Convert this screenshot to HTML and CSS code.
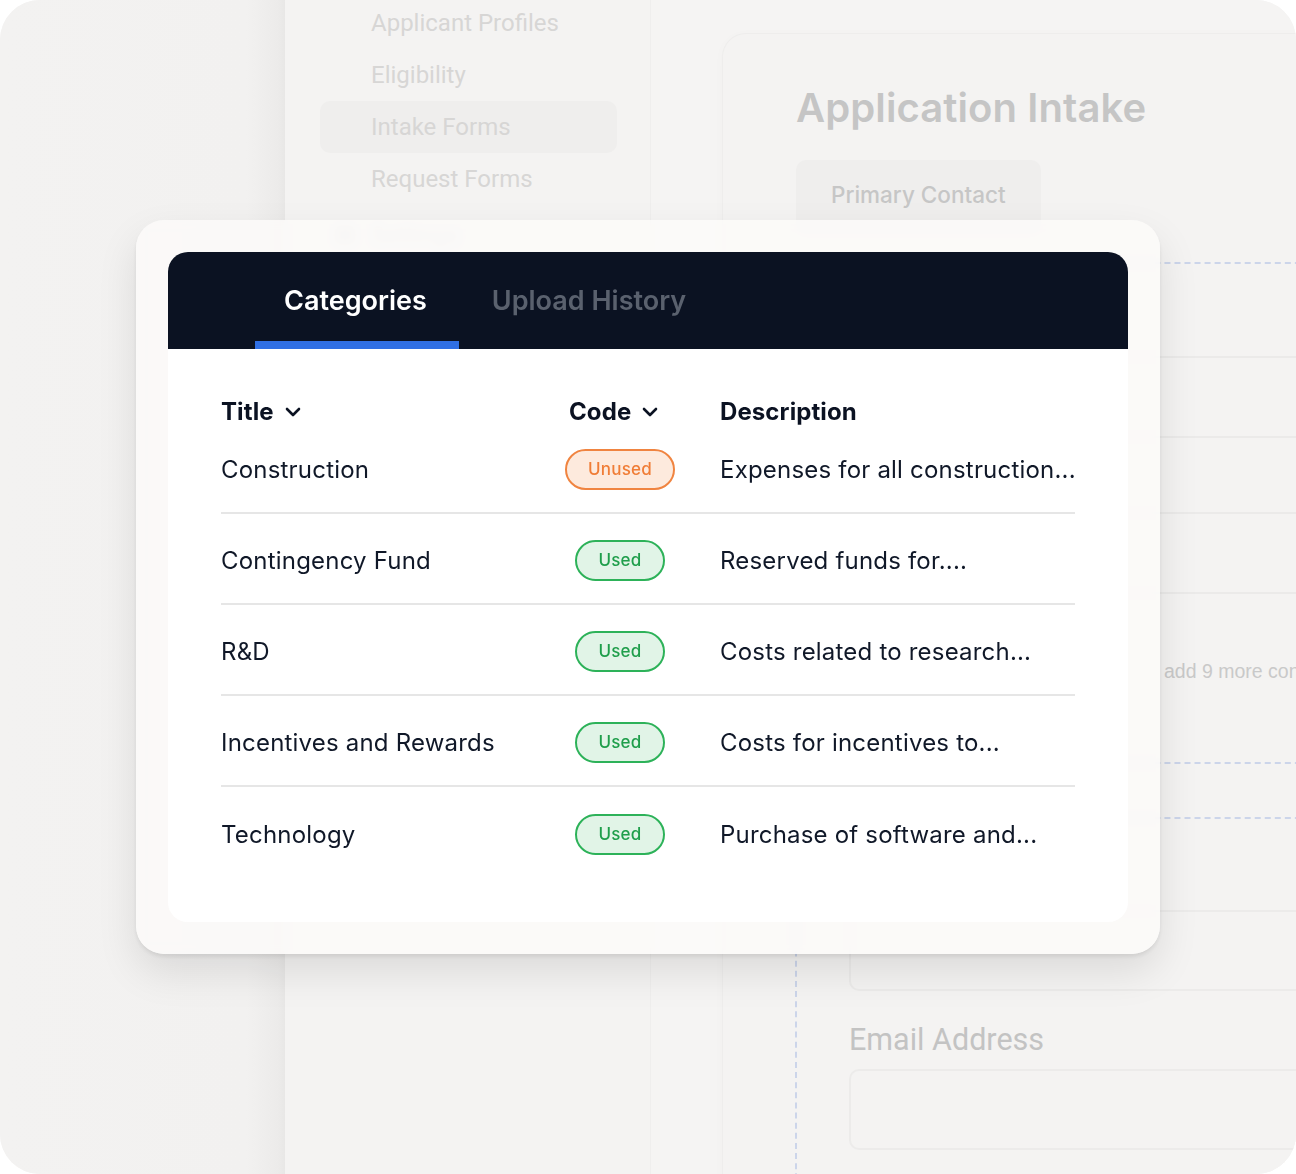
FILE: index.html
```html
<!DOCTYPE html>
<html lang="en">
<head>
  <meta charset="UTF-8">
  <title>Categories</title>
  <meta name="viewport" content="width=device-width, initial-scale=1">
  <link rel="stylesheet" href="styles.css">
</head>
<body>
  <div class="frame">
    <div class="gutter"></div>

    <aside class="sidebar">
      <nav class="nav">
        <div class="nav-item">Applicant Profiles</div>
        <div class="nav-item">Eligibility</div>
        <div class="nav-item active">Intake Forms</div>
        <div class="nav-item">Request Forms</div>
        <div class="nav-item with-icon"><span class="nav-icon"></span>Settings</div>
      </nav>
    </aside>

    <main class="main">
      <section class="form-card">
        <h1 class="form-title">Application Intake</h1>
        <div class="form-tab">Primary Contact</div>
        <div class="dashed"></div>
        <div class="field-rows">
          <div class="field-row tall"></div>
          <div class="field-row"></div>
          <div class="field-row short"></div>
          <div class="field-row"></div>
        </div>
        <div class="add-more">add 9 more contacts</div>
        <div class="dashed first"></div>
        <div class="dashed second"></div>
        <div class="nested">
          <div class="input top-input"></div>
          <label class="field-label">Email Address</label>
          <div class="input"></div>
        </div>
      </section>
    </main>

    <!-- floating categories panel -->
    <div class="overlay">
      <div class="panel">
        <div class="tabs">
          <div class="tab active">Categories</div>
          <div class="tab">Upload History</div>
        </div>
        <div class="table">
          <div class="row head">
            <div class="cell">Title <svg class="chev" viewBox="0 0 16 10"><path d="M2 2l6 6 6-6"/></svg></div>
            <div class="cell code-head">Code <svg class="chev" viewBox="0 0 16 10"><path d="M2 2l6 6 6-6"/></svg></div>
            <div class="cell desc">Description</div>
          </div>
          <div class="row">
            <div class="cell">Construction</div>
            <div class="cell code"><span class="badge unused">Unused</span></div>
            <div class="cell desc">Expenses for all construction...</div>
          </div>
          <div class="row">
            <div class="cell">Contingency Fund</div>
            <div class="cell code"><span class="badge used">Used</span></div>
            <div class="cell desc">Reserved funds for....</div>
          </div>
          <div class="row">
            <div class="cell">R&amp;D</div>
            <div class="cell code"><span class="badge used">Used</span></div>
            <div class="cell desc">Costs related to research...</div>
          </div>
          <div class="row">
            <div class="cell">Incentives and Rewards</div>
            <div class="cell code"><span class="badge used">Used</span></div>
            <div class="cell desc">Costs for incentives to...</div>
          </div>
          <div class="row">
            <div class="cell">Technology</div>
            <div class="cell code"><span class="badge used">Used</span></div>
            <div class="cell desc">Purchase of software and...</div>
          </div>
        </div>
      </div>
    </div>
  </div>
</body>
</html>
```

FILE: styles.css
```css
:root {
  --bg: #f4f3f2;
  --navy: #0b1222;
  --ink: #101828;
  --faint: #d7d6d5;
  --ghost: #c5c5c5;
  --line: #ebeae9;
  --dash: #ccd5ea;
  --blue: #2f6fe4;
}
* { box-sizing: border-box; }
body {
  margin: 0;
  background: #fff;
  font-family: 'Inter', 'Noto Sans', sans-serif;
  color: var(--ink);
}
.frame {
  position: relative;
  width: 1296px;
  height: 1174px;
  background: var(--bg);
  border-radius: 40px;
  overflow: hidden;
  display: flex;
}

/* background app, faded */
.gutter {
  width: 285px;
  flex-shrink: 0;
  background: linear-gradient(90deg, #f3f2f1 0, #f2f1f0 246px, #ecebea 278px, #e8e7e6 285px);
}
.sidebar {
  width: 366px;
  flex-shrink: 0;
  background: #f4f3f2;
  border-right: 1px solid #efeeed;
}
.nav {
  margin: -3px 33px 0 35px;
}
.nav-item {
  height: 52px;
  line-height: 52px;
  padding-left: 51px;
  font-family: 'Roboto', 'Liberation Sans', sans-serif;
  font-size: 24px;
  color: var(--faint);
  border-radius: 10px;
}
.nav-item.active {
  background: #efeeed;
}
.nav-item.with-icon {
  display: flex;
  align-items: center;
  padding-left: 15px;
  gap: 16px;
  line-height: normal;
  margin-top: 4px;
}
.nav-icon {
  width: 20px;
  height: 18px;
  border-radius: 3px;
  background: #e2e1e0;
}
.main {
  flex: 1;
  padding: 33px 0 0 71px;
  background: #f5f4f3;
}
.form-card {
  height: 1300px;
  background: var(--bg);
  border: 1px solid #eeedec;
  border-right: none;
  border-radius: 24px 0 0 24px;
  padding: 50px 0 0 73px;
  box-shadow: 0 2px 12px rgba(0,0,0,0.02);
}
.form-title {
  margin: 0;
  font-size: 40px;
  line-height: 48px;
  font-weight: 600;
  color: var(--ghost);
  letter-spacing: 0.1px;
}
.form-tab {
  display: inline-block;
  margin-top: 28px;
  padding: 0 35px;
  height: 72px;
  line-height: 70px;
  background: #efeeed;
  border-radius: 10px;
  font-size: 22.5px;
  font-weight: 500;
  color: #c6c6c6;
}
.dashed {
  margin-top: 30px;
  margin-left: -73px;
  border-top: 2px dashed var(--dash);
}
.field-rows {
  margin-left: -73px;
}
.field-row {
  height: 80px;
  border-bottom: 2px solid var(--line);
}
.field-row.tall { height: 94px; }
.field-row.short { height: 76px; }
.add-more {
  margin-top: 66px;
  margin-left: 368px;
  white-space: nowrap;
  font-family: 'Liberation Sans', Arial, sans-serif;
  font-size: 19.5px;
  color: #c9c9c9;
}
.dashed.first { margin-top: 79px; }
.dashed.second { margin-top: 53px; }
.nested {
  margin-top: 91px;
  margin-left: -1px;
  padding-left: 52px;
  border-left: 2px dashed var(--dash);
  padding-bottom: 80px;
}
.input {
  height: 81px;
  border: 2px solid #ecebea;
  border-right: none;
  border-radius: 10px 0 0 10px;
  background: #f4f3f2;
}
.field-label {
  display: block;
  margin-top: 32px;
  height: 46px;
  font-family: 'Roboto', 'Liberation Sans', sans-serif;
  font-size: 30.5px;
  line-height: 34px;
  color: #c3c3c3;
}

/* floating categories panel */
.overlay {
  position: absolute;
  left: 136px;
  top: 220px;
  width: 1024px;
  height: 734px;
  padding: 32px;
  border-radius: 28px;
  background: rgba(251, 250, 249, 0.86);
  backdrop-filter: blur(5px);
  box-shadow: 0 3px 4px rgba(0,0,0,0.08), 0 18px 40px rgba(0,0,0,0.10);
}
.panel {
  height: 670px;
  background: #fff;
  border-radius: 20px;
  overflow: hidden;
}
.tabs {
  display: flex;
  height: 97px;
  padding-left: 87px;
  background: var(--navy);
}
.tab {
  display: flex;
  align-items: center;
  padding: 8px 32px 0 33px;
  border-bottom: 8px solid transparent;
  font-size: 27px;
  font-weight: 600;
  color: #5a616e;
}
.tab.active {
  color: #fff;
  border-bottom-color: var(--blue);
  padding-left: 29px;
}
.table {
  padding: 48px 53px 0;
}
.row {
  display: grid;
  grid-template-columns: 334px 130px 1fr;
  align-items: center;
  height: 91px;
  padding-top: 3px;
  font-size: 24px;
  letter-spacing: 0.2px;
  border-bottom: 2px solid #e6e6e6;
}
.row:last-child { border-bottom: none; }
.row.head {
  height: 26px;
  padding-top: 0;
  border-bottom: none;
  font-weight: 700;
  letter-spacing: 0.1px;
  color: var(--navy);
}
.cell {
  display: flex;
  align-items: center;
  white-space: nowrap;
}
.code-head { padding-left: 14px; }
.code { justify-content: center; }
.desc { padding-left: 35px; }
.chev {
  width: 16px;
  height: 10px;
  margin-left: 11px;
  fill: none;
  stroke: var(--navy);
  stroke-width: 2.6;
  stroke-linecap: round;
  stroke-linejoin: round;
}
.badge {
  display: inline-flex;
  align-items: center;
  height: 41px;
  padding: 0 21px;
  border-radius: 999px;
  border: 2px solid;
  font-size: 17px;
  font-weight: 500;
  letter-spacing: 0.2px;
}
.badge.unused {
  color: #f07d36;
  border-color: #f08440;
  background: #fdeadd;
}
.badge.used {
  color: #1f9e4b;
  border-color: #2db259;
  background: #e1f4e7;
}
```
